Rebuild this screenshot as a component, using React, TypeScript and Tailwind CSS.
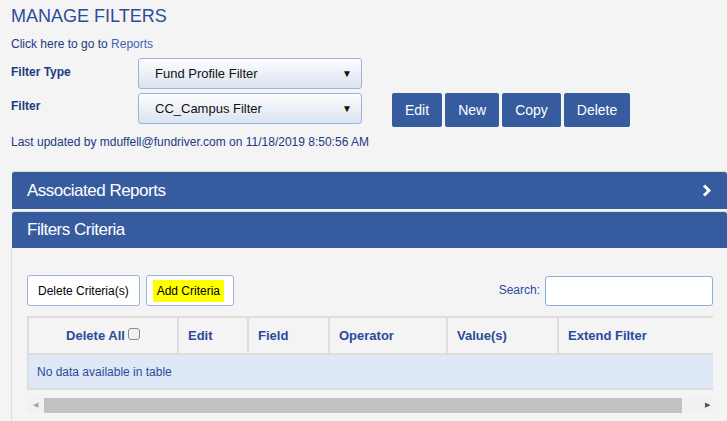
// Manage Filters — filter picker, action buttons and criteria table.

const actions = ["Edit", "New", "Copy", "Delete"];

const columns = [
  { label: "Delete All", width: "w-[148px]", center: true },
  { label: "Edit", width: "w-[70px]" },
  { label: "Field", width: "w-[81px]" },
  { label: "Operator", width: "w-[118px]" },
  { label: "Value(s)", width: "w-[111px]" },
  { label: "Extend Filter", width: "flex-1" },
];

function Select({ value }: { value: string }) {
  return (
    <div className="flex h-[31px] w-[224px] items-center justify-between rounded-[3px] border border-[#9db2d8] bg-gradient-to-b from-[#fdfdfe] to-[#dbe3f0] pl-[16px] pr-[9px] text-[13px] text-[#111]">
      <span>{value}</span>
      <span className="text-[10px]">▼</span>
    </div>
  );
}

function PanelHeader({ title, chevron }: { title: string; chevron?: boolean }) {
  return (
    <div className="flex h-full items-center justify-between rounded-t-[3px] border-t border-[#dcdcdc] bg-[#365c9f] pl-[15px] pr-[16px] text-[17px] text-white">
      <span className="tracking-[-0.5px]">{title}</span>
      {chevron && (
        <svg width="9" height="13" viewBox="0 0 9 13">
          <polyline points="2,1.5 7,6.5 2,11.5" fill="none" stroke="white" strokeWidth="3" />
        </svg>
      )}
    </div>
  );
}

export default function App() {
  return (
    <div className="h-[421px] w-[727px] overflow-hidden bg-[#f4f4f4] font-['Liberation_Sans',Arial,sans-serif] text-[12px] text-[#22397f]">
      <div className="pl-[11px]">
        <h1 className="pt-[5px] text-[18px] leading-[22px] text-[#2d4c9a]">MANAGE FILTERS</h1>
        <p className="mt-[10px] leading-[14px]">
          Click here to go to <span className="text-[#3f63b7]">Reports</span>
        </p>

        <div className="mt-[7px] flex flex-col gap-[4px]">
          <div className="flex items-center">
            <span className="w-[127px] pb-[3px] font-bold">Filter Type</span>
            <Select value="Fund Profile Filter" />
          </div>
          <div className="flex items-start">
            <span className="flex h-[31px] w-[127px] items-center pb-[6px] font-bold">Filter</span>
            <Select value="CC_Campus Filter" />
            <div className="ml-[30px] flex gap-[3px]">
              {actions.map((a) => (
                <button
                  key={a}
                  className="h-[34px] rounded-[2px] bg-[#365c9f] px-[13px] text-[14px] text-white"
                >
                  {a}
                </button>
              ))}
            </div>
          </div>
        </div>

        <p className="mt-[8px] leading-[14px]">
          Last updated by mduffell@fundriver.com on 11/18/2019 8:50:56 AM
        </p>
      </div>

      <div className="mt-[22px] ml-[12px] flex flex-col gap-[2px]">
        <div className="h-[38px]">
          <PanelHeader title="Associated Reports" chevron />
        </div>
        <div className="h-[37px]">
          <PanelHeader title="Filters Criteria" />
        </div>
      </div>

      <div className="ml-[11px] h-[200px] border-l border-[#dedede] pl-[15px] pt-[27px]">
        <div className="flex w-[686px] items-center justify-between">
          <div className="flex gap-[6px]">
            <button className="h-[31px] rounded-[3px] border border-[#9db2d8] bg-white px-[10px] text-[12px] text-black">
              Delete Criteria(s)
            </button>
            <button className="h-[31px] rounded-[3px] border border-[#9db2d8] bg-white pl-[6px] pr-[9px] text-[12px] text-black">
              <span className="bg-[#ffff00] px-[4px] py-[4px]">Add Criteria</span>
            </button>
          </div>
          <div className="flex items-center gap-[5px]">
            <span className="pb-[2px] text-[#2b4a9b]">Search:</span>
            <div className="h-[30px] w-[168px] rounded-[3px] border border-[#8fadd9] bg-white" />
          </div>
        </div>

        <div className="mt-[10px] w-[686px] border-2 border-r-0 border-[#dddddd]">
          <div className="flex h-[35px] text-[13px] font-bold text-[#2b4a9b]">
            {columns.map((c, i) => (
              <div
                key={c.label}
                className={`${c.width} flex items-center ${i > 0 ? "border-l-2 border-[#dddddd] pl-[9px]" : ""} ${c.center ? "justify-center" : ""}`}
              >
                {c.label}
                {c.center && (
                  <span className="mb-[4px] ml-[3px] inline-block h-[12px] w-[12px] rounded-[3px] border border-[#8a8a8a] bg-[#f0f0f0]" />
                )}
              </div>
            ))}
          </div>
          <div className="flex h-[35px] items-center border-t-2 border-[#dddddd] bg-[#dfe8f6] pl-[8px] text-[12px] text-[#2b4a9b]">
            No data available in table
          </div>
        </div>

        <div className="mt-[8px] flex h-[15px] w-[686px] items-center bg-[#f1f1f1]">
          <span className="w-[17px] pl-[6px] text-[7px] text-[#a3a3a3]">◀</span>
          <div className="h-[15px] w-[638px] bg-[#c1c1c1]" />
          <span className="flex-1 pr-[3px] text-right text-[7px] text-[#505050]">▶</span>
        </div>
      </div>
    </div>
  );
}
